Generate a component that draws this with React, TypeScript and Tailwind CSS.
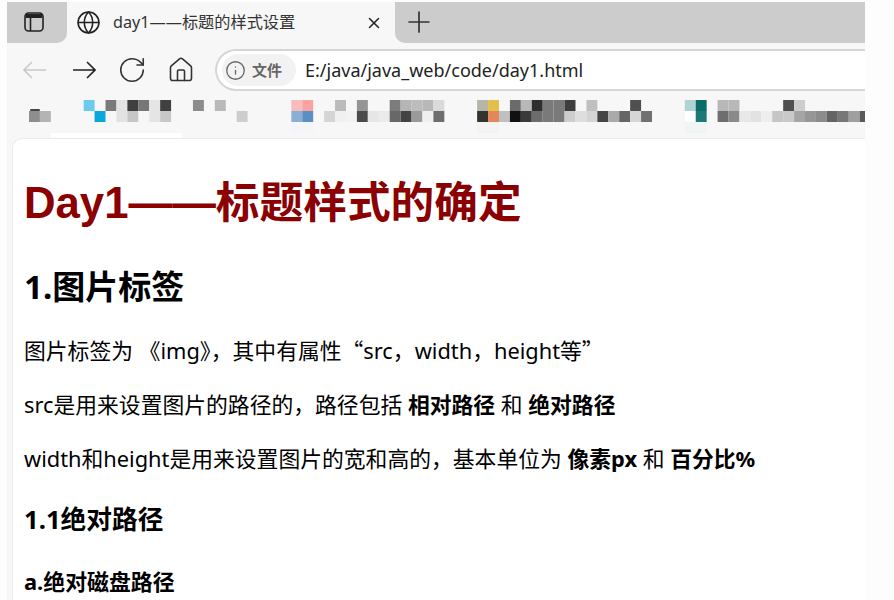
import React from "react";
import { Globe, House, Info, Plus, RotateCw, X } from "lucide-react";

// blurred bookmark bar: [column, colour] per row, cells are 10.93px wide
const topRow: [number, string][] = [
  [5, "#6ccbec"], [7, "#7a7a7a"], [8, "#e3e3e3"], [9, "#3f3f3f"], [10, "#777777"], [11, "#e5e5e5"], [12, "#404040"],
  [15, "#8c8c8c"], [17, "#b9b9b9"], [24, "#f8bcbc"], [25, "#fba3a3"], [28, "#bbbbbb"], [30, "#959595"],
  [33, "#7c7c7c"], [34, "#b5b5b5"], [35, "#bdbdbd"], [36, "#b8b8b8"], [37, "#dadada"], [41, "#b5b5aa"], [42, "#e3c04e"],
  [44, "#6b6b6b"], [45, "#b8b8b8"], [46, "#2f2f2f"], [47, "#7a7a7a"], [48, "#7a7a7a"], [49, "#3e3e3e"], [51, "#c0c0c0"],
  [55, "#505050"], [60, "#b0d2d3"], [61, "#0a6d68"], [63, "#b8b8b8"], [64, "#b8b8b8"], [69, "#505050"], [70, "#cdcdcd"],
];
const bottomRow: [number, string][] = [
  [0, "#8e8e8e"], [1, "#b4b4b4"], [6, "#0ba7dc"], [8, "#e3e3e3"], [9, "#c6c6c6"], [11, "#e5e5e5"], [12, "#c8c8c8"], [19, "#cdcdcd"],
  [24, "#8aaed6"], [25, "#5a8fc6"], [27, "#d5d5d5"], [28, "#f0f0f0"], [29, "#f2f2f2"], [30, "#4a4a4a"], [31, "#e6e6e6"], [32, "#ebebeb"],
  [33, "#686868"], [34, "#444444"], [35, "#9a9a9a"], [36, "#efefef"], [37, "#6e6e6e"], [41, "#33342e"], [42, "#e58658"],
  [43, "#c0c0c0"], [44, "#111111"], [45, "#3a3a3a"], [46, "#6c6c6c"], [47, "#7a7a7a"], [48, "#7a7a7a"], [49, "#cdcdcd"], [50, "#dedede"],
  [51, "#d4d4d4"], [52, "#444444"], [53, "#aaaaaa"], [54, "#666666"], [55, "#d6d6d6"], [56, "#707070"], [60, "#fefefe"], [61, "#1c7a76"],
  [63, "#6e6e6e"], [64, "#8a8a8a"], [65, "#e8e8e8"], [66, "#e2e2e2"], [67, "#eeeeee"], [68, "#c6c6c6"], [69, "#c9c9c9"], [70, "#a5a5a5"],
  [71, "#969696"], [72, "#8c8c8c"], [73, "#646464"], [74, "#777777"], [75, "#9f9f9f"], [76, "#5a5a5a"],
];
const fadedRow: [number, string][] = [[60, "#f0f4f5"], [61, "#f0f4f5"], [41, "#f5f2f2"], [42, "#f5f2f2"], [24, "#f3f5f8"], [25, "#f3f5f8"]];

const cellX = (col: number) => 22 + col * 10.93;

function BookmarkMosaic() {
  return (
    <svg width="858" height="34" viewBox="0 0 858 34" className="block">
      <rect x="23" y="9" width="10" height="2" rx="1" fill="#444444" />
      {topRow.map(([col, color]) => (
        <rect key={col} x={cellX(col)} y="0" width="10.93" height="11" fill={color} />
      ))}
      {bottomRow.map(([col, color]) => (
        <rect key={col} x={cellX(col)} y="11" width="10.93" height="11" fill={color} />
      ))}
      {fadedRow.map(([col, color]) => (
        <rect key={col} x={cellX(col)} y="22" width="10.93" height="11" fill={color} />
      ))}
    </svg>
  );
}

function TabActionsIcon() {
  return (
    <svg width="20" height="20" viewBox="0 0 20 20" fill="none" className="text-[#222222]">
      <rect x="1" y="1" width="18" height="18" rx="3.5" stroke="currentColor" strokeWidth="1.6" />
      <path d="M2 2h16v4H2z" fill="currentColor" />
      <path d="M6.5 6v13" stroke="currentColor" strokeWidth="1.6" />
    </svg>
  );
}

function NavArrow({ back }: { back?: boolean }) {
  return (
    <svg width="24" height="24" viewBox="0 0 24 24" fill="none" stroke="currentColor" strokeWidth="1.6" className={back ? "text-[#c9c9c9]" : "text-[#222222]"}>
      {back ? <path d="M23 12H1M9 4l-8 8 8 8" /> : <path d="M1 12h22M15 4l8 8-8 8" />}
    </svg>
  );
}

export default function App() {
  return (
    <div lang="zh-CN" className="w-[894px] h-[600px] overflow-hidden bg-[#fdfdfd] pt-[2px] font-['Noto_Sans','Noto_Sans_CJK_SC',sans-serif]">
      <div className="ml-[7px] w-[858px] h-[598px] flex flex-col bg-[#f7f7f7]">
        {/* Tab strip */}
        <div className="flex h-[41px] shrink-0">
          <div className="w-[60px] bg-[#cccccc] rounded-br-[10px] flex items-center pl-[17px] pb-[1px]">
            <TabActionsIcon />
          </div>
          <div className="w-[328px] flex items-center pl-[9px] text-[#333333]">
            <Globe size={25} strokeWidth={1.5} className="text-[#222222]" />
            <span className="ml-[12px] text-[16.2px] leading-none whitespace-nowrap">day1——标题的样式设置</span>
            <X size={18} strokeWidth={2} className="ml-auto mr-[12px] text-[#222222]" />
          </div>
          <div className="flex-1 bg-[#cccccc] rounded-bl-[10px] flex items-center pl-[7px] pb-[1px]">
            <Plus size={34} strokeWidth={1.2} className="text-[#333333]" />
          </div>
        </div>

        {/* Toolbar */}
        <div className="flex items-center h-[52px] pt-[2px] shrink-0">
          <div className="w-[208px] flex items-center pl-[16px] shrink-0">
            <NavArrow back />
            <div className="ml-[25px]">
              <NavArrow />
            </div>
            <RotateCw size={30} strokeWidth={1.25} className="ml-[21px] text-[#333333]" />
            <House size={28} strokeWidth={1.35} className="ml-[20px] text-[#333333]" />
          </div>
          <div className="flex-1 h-[42px] bg-white border-2 border-r-0 border-[#d6d6d6] rounded-l-full flex items-center pl-[5px]">
            <div className="h-[32px] w-[74px] rounded-full bg-[#f2f2f2] flex items-center pl-[3px]">
              <Info size={21} strokeWidth={1.5} className="text-[#666666]" />
              <span className="ml-[6px] text-[15px] font-bold text-[#666666] leading-none whitespace-nowrap">文件</span>
            </div>
            <span className="ml-[9px] text-[18px] text-[#222222] leading-none whitespace-nowrap">E:/java/java_web/code/day1.html</span>
          </div>
        </div>

        {/* Bookmarks */}
        <div className="h-[43px] pt-[5px] shrink-0 relative">
          <BookmarkMosaic />
          <div className="absolute left-[44px] bottom-0 w-[131px] h-[5px] bg-white" />
        </div>

        {/* Page */}
        <div className="flex-1 ml-[5px] bg-white border-t border-l border-[#ebebeb] rounded-tl-[10px] pl-[11px] overflow-hidden text-black">
          <h1 className="mt-[36px] text-[43.7px] leading-[56px] font-bold text-[#8b0000] whitespace-nowrap font-['Liberation_Sans','Noto_Sans_CJK_SC',sans-serif]">
            Day1——标题样式的确定
          </h1>
          <h2 className="mt-[34px] text-[33px] leading-[44px] font-bold whitespace-nowrap">1.图片标签</h2>
          <p className="mt-[25px] text-[21.8px] leading-[32px] whitespace-nowrap">
            图片标签为 《img》，其中有属性
            <span className="font-['Noto_Sans_CJK_SC',sans-serif]">“</span>
            src，width，height等
            <span className="font-['Noto_Sans_CJK_SC',sans-serif]">”</span>
          </p>
          <p className="mt-[22px] text-[21.8px] leading-[32px] whitespace-nowrap">
            src是用来设置图片的路径的，路径包括 <strong>相对路径</strong> 和 <strong>绝对路径</strong>
          </p>
          <p className="mt-[22px] text-[21.8px] leading-[32px] whitespace-nowrap">
            width和height是用来设置图片的宽和高的，基本单位为 <strong>像素px</strong> 和 <strong>百分比%</strong>
          </p>
          <h3 className="mt-[27px] text-[25.7px] leading-[36px] font-bold whitespace-nowrap">1.1绝对路径</h3>
          <h4 className="mt-[28px] text-[21.9px] leading-[32px] font-bold whitespace-nowrap">a.绝对磁盘路径</h4>
        </div>
      </div>
    </div>
  );
}
